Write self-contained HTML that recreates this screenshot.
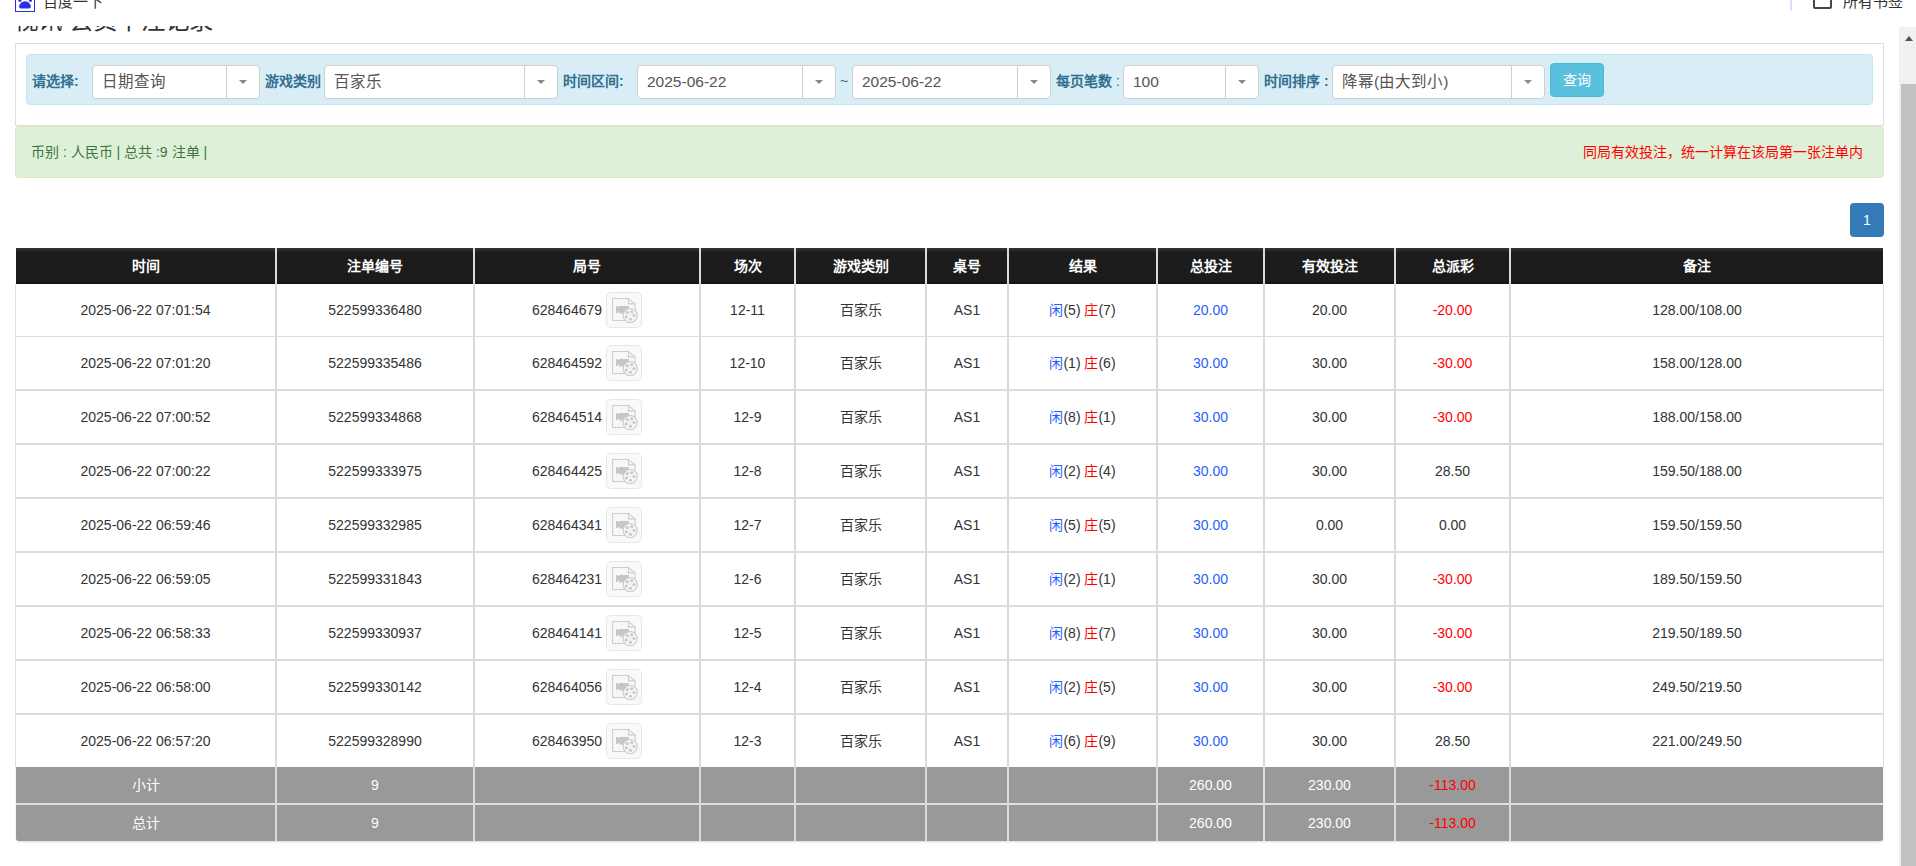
<!DOCTYPE html>
<html lang="zh-CN"><head><meta charset="utf-8"><title>视讯会员下注记录</title>
<style>
*{box-sizing:border-box}
html,body{margin:0;padding:0}
body{width:1916px;height:866px;overflow:hidden;position:relative;background:#fff;font-family:"Liberation Sans",sans-serif;font-size:14px;color:#333}
.a{position:absolute}
.t{position:absolute;white-space:nowrap}
.lbl{position:absolute;white-space:nowrap;font-weight:bold;color:#31708f;font-size:14px;line-height:20px;top:71px}
.sel{position:absolute;top:65px;height:34px;background:#fff;border:1px solid #cfcfcf;border-radius:4px}
.sel .v{position:absolute;left:9px;top:0;line-height:32px;font-size:15.5px;color:#555;white-space:nowrap}
.sel .ar{position:absolute;right:0;top:0;width:33px;height:32px;border-left:1px solid #cfcfcf}
.sel .ar:after{content:"";position:absolute;left:12px;top:14px;border-left:4px solid transparent;border-right:4px solid transparent;border-top:4px solid #888}
.cell{position:absolute;text-align:center;white-space:nowrap;font-size:14px;color:#333}
.hd{position:absolute;text-align:center;white-space:nowrap;font-size:14px;color:#fff;font-weight:bold;line-height:36px}
.blue{color:#1f5fff}.red{color:#ff0000}
</style></head><body>

<div class="t" style="left:14px;top:4px;font-size:24.5px;line-height:34px;color:#333">视讯 会员下注记录</div>
<div class="a" style="left:15px;top:43px;width:1869px;height:83px;border:1px solid #ddd;background:#fff"></div>
<div class="a" style="left:26px;top:54px;width:1847px;height:51px;border:1px solid #bce8f1;border-radius:4px;background:#d9edf7"></div>
<div class="lbl" style="left:32px">请选择:</div>
<div class="lbl" style="left:265px">游戏类别</div>
<div class="lbl" style="left:563px">时间区间:</div>
<div class="lbl" style="left:1056px">每页笔数<span style="font-weight:normal"> :</span></div>
<div class="lbl" style="left:1264px">时间排序 :</div>
<div class="sel" style="left:92px;width:168px"><span class="v">日期查询</span><span class="ar"></span></div>
<div class="sel" style="left:324px;width:234px"><span class="v">百家乐</span><span class="ar"></span></div>
<div class="sel" style="left:637px;width:199px"><span class="v">2025-06-22</span><span class="ar"></span></div>
<div class="sel" style="left:852px;width:199px"><span class="v">2025-06-22</span><span class="ar"></span></div>
<div class="sel" style="left:1123px;width:136px"><span class="v">100</span><span class="ar"></span></div>
<div class="sel" style="left:1332px;width:213px"><span class="v">降幂(由大到小)</span><span class="ar"></span></div>
<div class="t" style="left:840px;top:71px;line-height:20px;color:#31708f">~</div>
<div class="a" style="left:1550px;top:63px;width:54px;height:34px;background:#5bc0de;border:1px solid #46b8da;border-radius:4px;color:#fff;text-align:center;line-height:32px;font-size:14px">查询</div>
<div class="a" style="left:15px;top:126px;width:1869px;height:52px;border:1px solid #d6e9c6;border-radius:4px;background:#dff0d8"></div>
<div class="t" style="left:31px;top:142px;line-height:20px;color:#3c763d">币别 : 人民币 | 总共 :9 注单 |</div>
<div class="t" style="left:1583px;top:142px;line-height:20px;color:#ff0000">同局有效投注，统一计算在该局第一张注单内</div>
<div class="a" style="left:1850px;top:203px;width:34px;height:34px;background:#337ab7;border-radius:4px;color:#fff;text-align:center;line-height:34px;font-size:14px">1</div>
<div class="a" style="left:16px;top:248px;width:1867px;height:36px;background:linear-gradient(#363636 0,#2a2a2a 2px,#1c1c1c 4px,#1b1b1b 34px,#0c0c0c 36px)"></div>
<div class="a" style="left:15px;top:284px;width:1px;height:483px;background:#ddd"></div>
<div class="a" style="left:1883px;top:284px;width:1px;height:483px;background:#ddd"></div>
<div class="a" style="left:15px;top:336px;width:1868px;height:1px;background:#dcdcdc"></div>
<div class="a" style="left:15px;top:389px;width:1868px;height:2px;background:#dcdcdc"></div>
<div class="a" style="left:15px;top:443px;width:1868px;height:2px;background:#dcdcdc"></div>
<div class="a" style="left:15px;top:497px;width:1868px;height:2px;background:#dcdcdc"></div>
<div class="a" style="left:15px;top:551px;width:1868px;height:2px;background:#dcdcdc"></div>
<div class="a" style="left:15px;top:605px;width:1868px;height:2px;background:#dcdcdc"></div>
<div class="a" style="left:15px;top:659px;width:1868px;height:2px;background:#dcdcdc"></div>
<div class="a" style="left:15px;top:713px;width:1868px;height:2px;background:#dcdcdc"></div>
<div class="a" style="left:16px;top:767px;width:1867px;height:74px;background:#999;border-radius:0 0 3px 3px;box-shadow:0 1px 2px rgba(0,0,0,.15)"></div>
<div class="a" style="left:16px;top:803px;width:1867px;height:2px;background:#e0e0e0"></div>
<div class="a" style="left:275px;top:248px;width:2px;height:593px;background:#dadada"></div>
<div class="a" style="left:473px;top:248px;width:2px;height:593px;background:#dadada"></div>
<div class="a" style="left:699px;top:248px;width:2px;height:593px;background:#dadada"></div>
<div class="a" style="left:794px;top:248px;width:2px;height:593px;background:#dadada"></div>
<div class="a" style="left:925px;top:248px;width:2px;height:593px;background:#dadada"></div>
<div class="a" style="left:1007px;top:248px;width:2px;height:593px;background:#dadada"></div>
<div class="a" style="left:1156px;top:248px;width:2px;height:593px;background:#dadada"></div>
<div class="a" style="left:1263px;top:248px;width:2px;height:593px;background:#dadada"></div>
<div class="a" style="left:1394px;top:248px;width:2px;height:593px;background:#dadada"></div>
<div class="a" style="left:1509px;top:248px;width:2px;height:593px;background:#dadada"></div>
<div class="hd" style="left:16px;width:259px;top:248px">时间</div>
<div class="hd" style="left:277px;width:196px;top:248px">注单编号</div>
<div class="hd" style="left:475px;width:224px;top:248px">局号</div>
<div class="hd" style="left:701px;width:93px;top:248px">场次</div>
<div class="hd" style="left:796px;width:129px;top:248px">游戏类别</div>
<div class="hd" style="left:927px;width:80px;top:248px">桌号</div>
<div class="hd" style="left:1009px;width:147px;top:248px">结果</div>
<div class="hd" style="left:1158px;width:105px;top:248px">总投注</div>
<div class="hd" style="left:1265px;width:129px;top:248px">有效投注</div>
<div class="hd" style="left:1396px;width:113px;top:248px">总派彩</div>
<div class="hd" style="left:1511px;width:372px;top:248px">备注</div>
<div class="cell" style="left:16px;width:259px;top:284px;height:52px;line-height:52px">2025-06-22 07:01:54</div>
<div class="cell" style="left:277px;width:196px;top:284px;height:52px;line-height:52px">522599336480</div>
<div class="cell" style="left:475px;width:224px;top:284px;height:52px;line-height:52px">628464679<span style="display:inline-block;vertical-align:middle;margin-left:4px;width:36px;height:36px;border:1px solid #e6e6e6;border-radius:5px;background:#f9f9f9;position:relative;top:-1px"><svg width="36" height="36" viewBox="0 0 36 36" style="position:absolute;left:-1px;top:-1px"><path d="M6.6 6.5h15.9l6.6 5.4v16.6H6.6z" fill="#f7f7f7" stroke="#cdcdcd" stroke-width="1.1"/><path d="M22.5 6.5v5.4h6.6" fill="none" stroke="#cdcdcd" stroke-width="1.1"/><path d="M10 14h1.8v0.9h1.4V14h9.7v7.6h-9.7v-1.7h-1.4v1H10z" fill="#c6c6c6"/><circle cx="24.2" cy="23.6" r="7.1" fill="#f5f5f5" stroke="#cbcbcb" stroke-width="1.1"/><circle cx="21.3" cy="20.6" r="1.55" fill="#c9c9c9"/><circle cx="25.7" cy="19.7" r="1.55" fill="#c9c9c9"/><circle cx="28" cy="23.5" r="1.55" fill="#c9c9c9"/><circle cx="20.3" cy="25" r="1.55" fill="#c9c9c9"/><circle cx="24.5" cy="27.3" r="1.55" fill="#c9c9c9"/><circle cx="24" cy="23.3" r="0.5" fill="#c9c9c9"/></svg></span></div>
<div class="cell" style="left:701px;width:93px;top:284px;height:52px;line-height:52px">12-11</div>
<div class="cell" style="left:796px;width:129px;top:284px;height:52px;line-height:52px">百家乐</div>
<div class="cell" style="left:927px;width:80px;top:284px;height:52px;line-height:52px">AS1</div>
<div class="cell" style="left:1009px;width:147px;top:284px;height:52px;line-height:52px"><span class="blue">闲</span>(5) <span class="red">庄</span>(7)</div>
<div class="cell" style="left:1158px;width:105px;top:284px;height:52px;line-height:52px"><span class="blue">20.00</span></div>
<div class="cell" style="left:1265px;width:129px;top:284px;height:52px;line-height:52px">20.00</div>
<div class="cell" style="left:1396px;width:113px;top:284px;height:52px;line-height:52px"><span class="red">-20.00</span></div>
<div class="cell" style="left:1511px;width:372px;top:284px;height:52px;line-height:52px">128.00/108.00</div>
<div class="cell" style="left:16px;width:259px;top:337px;height:52px;line-height:52px">2025-06-22 07:01:20</div>
<div class="cell" style="left:277px;width:196px;top:337px;height:52px;line-height:52px">522599335486</div>
<div class="cell" style="left:475px;width:224px;top:337px;height:52px;line-height:52px">628464592<span style="display:inline-block;vertical-align:middle;margin-left:4px;width:36px;height:36px;border:1px solid #e6e6e6;border-radius:5px;background:#f9f9f9;position:relative;top:-1px"><svg width="36" height="36" viewBox="0 0 36 36" style="position:absolute;left:-1px;top:-1px"><path d="M6.6 6.5h15.9l6.6 5.4v16.6H6.6z" fill="#f7f7f7" stroke="#cdcdcd" stroke-width="1.1"/><path d="M22.5 6.5v5.4h6.6" fill="none" stroke="#cdcdcd" stroke-width="1.1"/><path d="M10 14h1.8v0.9h1.4V14h9.7v7.6h-9.7v-1.7h-1.4v1H10z" fill="#c6c6c6"/><circle cx="24.2" cy="23.6" r="7.1" fill="#f5f5f5" stroke="#cbcbcb" stroke-width="1.1"/><circle cx="21.3" cy="20.6" r="1.55" fill="#c9c9c9"/><circle cx="25.7" cy="19.7" r="1.55" fill="#c9c9c9"/><circle cx="28" cy="23.5" r="1.55" fill="#c9c9c9"/><circle cx="20.3" cy="25" r="1.55" fill="#c9c9c9"/><circle cx="24.5" cy="27.3" r="1.55" fill="#c9c9c9"/><circle cx="24" cy="23.3" r="0.5" fill="#c9c9c9"/></svg></span></div>
<div class="cell" style="left:701px;width:93px;top:337px;height:52px;line-height:52px">12-10</div>
<div class="cell" style="left:796px;width:129px;top:337px;height:52px;line-height:52px">百家乐</div>
<div class="cell" style="left:927px;width:80px;top:337px;height:52px;line-height:52px">AS1</div>
<div class="cell" style="left:1009px;width:147px;top:337px;height:52px;line-height:52px"><span class="blue">闲</span>(1) <span class="red">庄</span>(6)</div>
<div class="cell" style="left:1158px;width:105px;top:337px;height:52px;line-height:52px"><span class="blue">30.00</span></div>
<div class="cell" style="left:1265px;width:129px;top:337px;height:52px;line-height:52px">30.00</div>
<div class="cell" style="left:1396px;width:113px;top:337px;height:52px;line-height:52px"><span class="red">-30.00</span></div>
<div class="cell" style="left:1511px;width:372px;top:337px;height:52px;line-height:52px">158.00/128.00</div>
<div class="cell" style="left:16px;width:259px;top:391px;height:52px;line-height:52px">2025-06-22 07:00:52</div>
<div class="cell" style="left:277px;width:196px;top:391px;height:52px;line-height:52px">522599334868</div>
<div class="cell" style="left:475px;width:224px;top:391px;height:52px;line-height:52px">628464514<span style="display:inline-block;vertical-align:middle;margin-left:4px;width:36px;height:36px;border:1px solid #e6e6e6;border-radius:5px;background:#f9f9f9;position:relative;top:-1px"><svg width="36" height="36" viewBox="0 0 36 36" style="position:absolute;left:-1px;top:-1px"><path d="M6.6 6.5h15.9l6.6 5.4v16.6H6.6z" fill="#f7f7f7" stroke="#cdcdcd" stroke-width="1.1"/><path d="M22.5 6.5v5.4h6.6" fill="none" stroke="#cdcdcd" stroke-width="1.1"/><path d="M10 14h1.8v0.9h1.4V14h9.7v7.6h-9.7v-1.7h-1.4v1H10z" fill="#c6c6c6"/><circle cx="24.2" cy="23.6" r="7.1" fill="#f5f5f5" stroke="#cbcbcb" stroke-width="1.1"/><circle cx="21.3" cy="20.6" r="1.55" fill="#c9c9c9"/><circle cx="25.7" cy="19.7" r="1.55" fill="#c9c9c9"/><circle cx="28" cy="23.5" r="1.55" fill="#c9c9c9"/><circle cx="20.3" cy="25" r="1.55" fill="#c9c9c9"/><circle cx="24.5" cy="27.3" r="1.55" fill="#c9c9c9"/><circle cx="24" cy="23.3" r="0.5" fill="#c9c9c9"/></svg></span></div>
<div class="cell" style="left:701px;width:93px;top:391px;height:52px;line-height:52px">12-9</div>
<div class="cell" style="left:796px;width:129px;top:391px;height:52px;line-height:52px">百家乐</div>
<div class="cell" style="left:927px;width:80px;top:391px;height:52px;line-height:52px">AS1</div>
<div class="cell" style="left:1009px;width:147px;top:391px;height:52px;line-height:52px"><span class="blue">闲</span>(8) <span class="red">庄</span>(1)</div>
<div class="cell" style="left:1158px;width:105px;top:391px;height:52px;line-height:52px"><span class="blue">30.00</span></div>
<div class="cell" style="left:1265px;width:129px;top:391px;height:52px;line-height:52px">30.00</div>
<div class="cell" style="left:1396px;width:113px;top:391px;height:52px;line-height:52px"><span class="red">-30.00</span></div>
<div class="cell" style="left:1511px;width:372px;top:391px;height:52px;line-height:52px">188.00/158.00</div>
<div class="cell" style="left:16px;width:259px;top:445px;height:52px;line-height:52px">2025-06-22 07:00:22</div>
<div class="cell" style="left:277px;width:196px;top:445px;height:52px;line-height:52px">522599333975</div>
<div class="cell" style="left:475px;width:224px;top:445px;height:52px;line-height:52px">628464425<span style="display:inline-block;vertical-align:middle;margin-left:4px;width:36px;height:36px;border:1px solid #e6e6e6;border-radius:5px;background:#f9f9f9;position:relative;top:-1px"><svg width="36" height="36" viewBox="0 0 36 36" style="position:absolute;left:-1px;top:-1px"><path d="M6.6 6.5h15.9l6.6 5.4v16.6H6.6z" fill="#f7f7f7" stroke="#cdcdcd" stroke-width="1.1"/><path d="M22.5 6.5v5.4h6.6" fill="none" stroke="#cdcdcd" stroke-width="1.1"/><path d="M10 14h1.8v0.9h1.4V14h9.7v7.6h-9.7v-1.7h-1.4v1H10z" fill="#c6c6c6"/><circle cx="24.2" cy="23.6" r="7.1" fill="#f5f5f5" stroke="#cbcbcb" stroke-width="1.1"/><circle cx="21.3" cy="20.6" r="1.55" fill="#c9c9c9"/><circle cx="25.7" cy="19.7" r="1.55" fill="#c9c9c9"/><circle cx="28" cy="23.5" r="1.55" fill="#c9c9c9"/><circle cx="20.3" cy="25" r="1.55" fill="#c9c9c9"/><circle cx="24.5" cy="27.3" r="1.55" fill="#c9c9c9"/><circle cx="24" cy="23.3" r="0.5" fill="#c9c9c9"/></svg></span></div>
<div class="cell" style="left:701px;width:93px;top:445px;height:52px;line-height:52px">12-8</div>
<div class="cell" style="left:796px;width:129px;top:445px;height:52px;line-height:52px">百家乐</div>
<div class="cell" style="left:927px;width:80px;top:445px;height:52px;line-height:52px">AS1</div>
<div class="cell" style="left:1009px;width:147px;top:445px;height:52px;line-height:52px"><span class="blue">闲</span>(2) <span class="red">庄</span>(4)</div>
<div class="cell" style="left:1158px;width:105px;top:445px;height:52px;line-height:52px"><span class="blue">30.00</span></div>
<div class="cell" style="left:1265px;width:129px;top:445px;height:52px;line-height:52px">30.00</div>
<div class="cell" style="left:1396px;width:113px;top:445px;height:52px;line-height:52px"><span class="">28.50</span></div>
<div class="cell" style="left:1511px;width:372px;top:445px;height:52px;line-height:52px">159.50/188.00</div>
<div class="cell" style="left:16px;width:259px;top:499px;height:52px;line-height:52px">2025-06-22 06:59:46</div>
<div class="cell" style="left:277px;width:196px;top:499px;height:52px;line-height:52px">522599332985</div>
<div class="cell" style="left:475px;width:224px;top:499px;height:52px;line-height:52px">628464341<span style="display:inline-block;vertical-align:middle;margin-left:4px;width:36px;height:36px;border:1px solid #e6e6e6;border-radius:5px;background:#f9f9f9;position:relative;top:-1px"><svg width="36" height="36" viewBox="0 0 36 36" style="position:absolute;left:-1px;top:-1px"><path d="M6.6 6.5h15.9l6.6 5.4v16.6H6.6z" fill="#f7f7f7" stroke="#cdcdcd" stroke-width="1.1"/><path d="M22.5 6.5v5.4h6.6" fill="none" stroke="#cdcdcd" stroke-width="1.1"/><path d="M10 14h1.8v0.9h1.4V14h9.7v7.6h-9.7v-1.7h-1.4v1H10z" fill="#c6c6c6"/><circle cx="24.2" cy="23.6" r="7.1" fill="#f5f5f5" stroke="#cbcbcb" stroke-width="1.1"/><circle cx="21.3" cy="20.6" r="1.55" fill="#c9c9c9"/><circle cx="25.7" cy="19.7" r="1.55" fill="#c9c9c9"/><circle cx="28" cy="23.5" r="1.55" fill="#c9c9c9"/><circle cx="20.3" cy="25" r="1.55" fill="#c9c9c9"/><circle cx="24.5" cy="27.3" r="1.55" fill="#c9c9c9"/><circle cx="24" cy="23.3" r="0.5" fill="#c9c9c9"/></svg></span></div>
<div class="cell" style="left:701px;width:93px;top:499px;height:52px;line-height:52px">12-7</div>
<div class="cell" style="left:796px;width:129px;top:499px;height:52px;line-height:52px">百家乐</div>
<div class="cell" style="left:927px;width:80px;top:499px;height:52px;line-height:52px">AS1</div>
<div class="cell" style="left:1009px;width:147px;top:499px;height:52px;line-height:52px"><span class="blue">闲</span>(5) <span class="red">庄</span>(5)</div>
<div class="cell" style="left:1158px;width:105px;top:499px;height:52px;line-height:52px"><span class="blue">30.00</span></div>
<div class="cell" style="left:1265px;width:129px;top:499px;height:52px;line-height:52px">0.00</div>
<div class="cell" style="left:1396px;width:113px;top:499px;height:52px;line-height:52px"><span class="">0.00</span></div>
<div class="cell" style="left:1511px;width:372px;top:499px;height:52px;line-height:52px">159.50/159.50</div>
<div class="cell" style="left:16px;width:259px;top:553px;height:52px;line-height:52px">2025-06-22 06:59:05</div>
<div class="cell" style="left:277px;width:196px;top:553px;height:52px;line-height:52px">522599331843</div>
<div class="cell" style="left:475px;width:224px;top:553px;height:52px;line-height:52px">628464231<span style="display:inline-block;vertical-align:middle;margin-left:4px;width:36px;height:36px;border:1px solid #e6e6e6;border-radius:5px;background:#f9f9f9;position:relative;top:-1px"><svg width="36" height="36" viewBox="0 0 36 36" style="position:absolute;left:-1px;top:-1px"><path d="M6.6 6.5h15.9l6.6 5.4v16.6H6.6z" fill="#f7f7f7" stroke="#cdcdcd" stroke-width="1.1"/><path d="M22.5 6.5v5.4h6.6" fill="none" stroke="#cdcdcd" stroke-width="1.1"/><path d="M10 14h1.8v0.9h1.4V14h9.7v7.6h-9.7v-1.7h-1.4v1H10z" fill="#c6c6c6"/><circle cx="24.2" cy="23.6" r="7.1" fill="#f5f5f5" stroke="#cbcbcb" stroke-width="1.1"/><circle cx="21.3" cy="20.6" r="1.55" fill="#c9c9c9"/><circle cx="25.7" cy="19.7" r="1.55" fill="#c9c9c9"/><circle cx="28" cy="23.5" r="1.55" fill="#c9c9c9"/><circle cx="20.3" cy="25" r="1.55" fill="#c9c9c9"/><circle cx="24.5" cy="27.3" r="1.55" fill="#c9c9c9"/><circle cx="24" cy="23.3" r="0.5" fill="#c9c9c9"/></svg></span></div>
<div class="cell" style="left:701px;width:93px;top:553px;height:52px;line-height:52px">12-6</div>
<div class="cell" style="left:796px;width:129px;top:553px;height:52px;line-height:52px">百家乐</div>
<div class="cell" style="left:927px;width:80px;top:553px;height:52px;line-height:52px">AS1</div>
<div class="cell" style="left:1009px;width:147px;top:553px;height:52px;line-height:52px"><span class="blue">闲</span>(2) <span class="red">庄</span>(1)</div>
<div class="cell" style="left:1158px;width:105px;top:553px;height:52px;line-height:52px"><span class="blue">30.00</span></div>
<div class="cell" style="left:1265px;width:129px;top:553px;height:52px;line-height:52px">30.00</div>
<div class="cell" style="left:1396px;width:113px;top:553px;height:52px;line-height:52px"><span class="red">-30.00</span></div>
<div class="cell" style="left:1511px;width:372px;top:553px;height:52px;line-height:52px">189.50/159.50</div>
<div class="cell" style="left:16px;width:259px;top:607px;height:52px;line-height:52px">2025-06-22 06:58:33</div>
<div class="cell" style="left:277px;width:196px;top:607px;height:52px;line-height:52px">522599330937</div>
<div class="cell" style="left:475px;width:224px;top:607px;height:52px;line-height:52px">628464141<span style="display:inline-block;vertical-align:middle;margin-left:4px;width:36px;height:36px;border:1px solid #e6e6e6;border-radius:5px;background:#f9f9f9;position:relative;top:-1px"><svg width="36" height="36" viewBox="0 0 36 36" style="position:absolute;left:-1px;top:-1px"><path d="M6.6 6.5h15.9l6.6 5.4v16.6H6.6z" fill="#f7f7f7" stroke="#cdcdcd" stroke-width="1.1"/><path d="M22.5 6.5v5.4h6.6" fill="none" stroke="#cdcdcd" stroke-width="1.1"/><path d="M10 14h1.8v0.9h1.4V14h9.7v7.6h-9.7v-1.7h-1.4v1H10z" fill="#c6c6c6"/><circle cx="24.2" cy="23.6" r="7.1" fill="#f5f5f5" stroke="#cbcbcb" stroke-width="1.1"/><circle cx="21.3" cy="20.6" r="1.55" fill="#c9c9c9"/><circle cx="25.7" cy="19.7" r="1.55" fill="#c9c9c9"/><circle cx="28" cy="23.5" r="1.55" fill="#c9c9c9"/><circle cx="20.3" cy="25" r="1.55" fill="#c9c9c9"/><circle cx="24.5" cy="27.3" r="1.55" fill="#c9c9c9"/><circle cx="24" cy="23.3" r="0.5" fill="#c9c9c9"/></svg></span></div>
<div class="cell" style="left:701px;width:93px;top:607px;height:52px;line-height:52px">12-5</div>
<div class="cell" style="left:796px;width:129px;top:607px;height:52px;line-height:52px">百家乐</div>
<div class="cell" style="left:927px;width:80px;top:607px;height:52px;line-height:52px">AS1</div>
<div class="cell" style="left:1009px;width:147px;top:607px;height:52px;line-height:52px"><span class="blue">闲</span>(8) <span class="red">庄</span>(7)</div>
<div class="cell" style="left:1158px;width:105px;top:607px;height:52px;line-height:52px"><span class="blue">30.00</span></div>
<div class="cell" style="left:1265px;width:129px;top:607px;height:52px;line-height:52px">30.00</div>
<div class="cell" style="left:1396px;width:113px;top:607px;height:52px;line-height:52px"><span class="red">-30.00</span></div>
<div class="cell" style="left:1511px;width:372px;top:607px;height:52px;line-height:52px">219.50/189.50</div>
<div class="cell" style="left:16px;width:259px;top:661px;height:52px;line-height:52px">2025-06-22 06:58:00</div>
<div class="cell" style="left:277px;width:196px;top:661px;height:52px;line-height:52px">522599330142</div>
<div class="cell" style="left:475px;width:224px;top:661px;height:52px;line-height:52px">628464056<span style="display:inline-block;vertical-align:middle;margin-left:4px;width:36px;height:36px;border:1px solid #e6e6e6;border-radius:5px;background:#f9f9f9;position:relative;top:-1px"><svg width="36" height="36" viewBox="0 0 36 36" style="position:absolute;left:-1px;top:-1px"><path d="M6.6 6.5h15.9l6.6 5.4v16.6H6.6z" fill="#f7f7f7" stroke="#cdcdcd" stroke-width="1.1"/><path d="M22.5 6.5v5.4h6.6" fill="none" stroke="#cdcdcd" stroke-width="1.1"/><path d="M10 14h1.8v0.9h1.4V14h9.7v7.6h-9.7v-1.7h-1.4v1H10z" fill="#c6c6c6"/><circle cx="24.2" cy="23.6" r="7.1" fill="#f5f5f5" stroke="#cbcbcb" stroke-width="1.1"/><circle cx="21.3" cy="20.6" r="1.55" fill="#c9c9c9"/><circle cx="25.7" cy="19.7" r="1.55" fill="#c9c9c9"/><circle cx="28" cy="23.5" r="1.55" fill="#c9c9c9"/><circle cx="20.3" cy="25" r="1.55" fill="#c9c9c9"/><circle cx="24.5" cy="27.3" r="1.55" fill="#c9c9c9"/><circle cx="24" cy="23.3" r="0.5" fill="#c9c9c9"/></svg></span></div>
<div class="cell" style="left:701px;width:93px;top:661px;height:52px;line-height:52px">12-4</div>
<div class="cell" style="left:796px;width:129px;top:661px;height:52px;line-height:52px">百家乐</div>
<div class="cell" style="left:927px;width:80px;top:661px;height:52px;line-height:52px">AS1</div>
<div class="cell" style="left:1009px;width:147px;top:661px;height:52px;line-height:52px"><span class="blue">闲</span>(2) <span class="red">庄</span>(5)</div>
<div class="cell" style="left:1158px;width:105px;top:661px;height:52px;line-height:52px"><span class="blue">30.00</span></div>
<div class="cell" style="left:1265px;width:129px;top:661px;height:52px;line-height:52px">30.00</div>
<div class="cell" style="left:1396px;width:113px;top:661px;height:52px;line-height:52px"><span class="red">-30.00</span></div>
<div class="cell" style="left:1511px;width:372px;top:661px;height:52px;line-height:52px">249.50/219.50</div>
<div class="cell" style="left:16px;width:259px;top:715px;height:52px;line-height:52px">2025-06-22 06:57:20</div>
<div class="cell" style="left:277px;width:196px;top:715px;height:52px;line-height:52px">522599328990</div>
<div class="cell" style="left:475px;width:224px;top:715px;height:52px;line-height:52px">628463950<span style="display:inline-block;vertical-align:middle;margin-left:4px;width:36px;height:36px;border:1px solid #e6e6e6;border-radius:5px;background:#f9f9f9;position:relative;top:-1px"><svg width="36" height="36" viewBox="0 0 36 36" style="position:absolute;left:-1px;top:-1px"><path d="M6.6 6.5h15.9l6.6 5.4v16.6H6.6z" fill="#f7f7f7" stroke="#cdcdcd" stroke-width="1.1"/><path d="M22.5 6.5v5.4h6.6" fill="none" stroke="#cdcdcd" stroke-width="1.1"/><path d="M10 14h1.8v0.9h1.4V14h9.7v7.6h-9.7v-1.7h-1.4v1H10z" fill="#c6c6c6"/><circle cx="24.2" cy="23.6" r="7.1" fill="#f5f5f5" stroke="#cbcbcb" stroke-width="1.1"/><circle cx="21.3" cy="20.6" r="1.55" fill="#c9c9c9"/><circle cx="25.7" cy="19.7" r="1.55" fill="#c9c9c9"/><circle cx="28" cy="23.5" r="1.55" fill="#c9c9c9"/><circle cx="20.3" cy="25" r="1.55" fill="#c9c9c9"/><circle cx="24.5" cy="27.3" r="1.55" fill="#c9c9c9"/><circle cx="24" cy="23.3" r="0.5" fill="#c9c9c9"/></svg></span></div>
<div class="cell" style="left:701px;width:93px;top:715px;height:52px;line-height:52px">12-3</div>
<div class="cell" style="left:796px;width:129px;top:715px;height:52px;line-height:52px">百家乐</div>
<div class="cell" style="left:927px;width:80px;top:715px;height:52px;line-height:52px">AS1</div>
<div class="cell" style="left:1009px;width:147px;top:715px;height:52px;line-height:52px"><span class="blue">闲</span>(6) <span class="red">庄</span>(9)</div>
<div class="cell" style="left:1158px;width:105px;top:715px;height:52px;line-height:52px"><span class="blue">30.00</span></div>
<div class="cell" style="left:1265px;width:129px;top:715px;height:52px;line-height:52px">30.00</div>
<div class="cell" style="left:1396px;width:113px;top:715px;height:52px;line-height:52px"><span class="">28.50</span></div>
<div class="cell" style="left:1511px;width:372px;top:715px;height:52px;line-height:52px">221.00/249.50</div>
<div class="cell" style="left:16px;width:259px;top:767px;height:36px;line-height:36px;color:#fff">小计</div>
<div class="cell" style="left:277px;width:196px;top:767px;height:36px;line-height:36px;color:#fff">9</div>
<div class="cell" style="left:1158px;width:105px;top:767px;height:36px;line-height:36px;color:#fff">260.00</div>
<div class="cell" style="left:1265px;width:129px;top:767px;height:36px;line-height:36px;color:#fff">230.00</div>
<div class="cell" style="left:1396px;width:113px;top:767px;height:36px;line-height:36px;color:#fff"><span class="red">-113.00</span></div>
<div class="cell" style="left:16px;width:259px;top:805px;height:36px;line-height:36px;color:#fff">总计</div>
<div class="cell" style="left:277px;width:196px;top:805px;height:36px;line-height:36px;color:#fff">9</div>
<div class="cell" style="left:1158px;width:105px;top:805px;height:36px;line-height:36px;color:#fff">260.00</div>
<div class="cell" style="left:1265px;width:129px;top:805px;height:36px;line-height:36px;color:#fff">230.00</div>
<div class="cell" style="left:1396px;width:113px;top:805px;height:36px;line-height:36px;color:#fff"><span class="red">-113.00</span></div>
<div class="a" style="left:0;top:0;width:1916px;height:26px;background:#fff;overflow:hidden">
<div class="a" style="left:15px;top:-8px;width:20px;height:20px;border:1px solid #2932e1;background:#fff"><svg width="18" height="18" viewBox="0 0 18 18" style="position:absolute;left:0;top:0"><ellipse cx="3.9" cy="6.8" rx="1.7" ry="2.3" fill="#2932e1"/><ellipse cx="14.4" cy="6.8" rx="1.7" ry="2.3" fill="#2932e1"/><path d="M9 8.2C6 8.2 3 11.4 3.1 13.5 3.2 15.6 5.5 15.9 9 15.4 12.5 15.9 14.8 15.6 14.9 13.5 15 11.4 12 8.2 9 8.2z" fill="#2932e1"/></svg></div>
<div class="t" style="left:43px;top:-8px;font-size:15px;line-height:20px;color:#333">百度一下</div>
<div class="a" style="left:1790px;top:0;width:2px;height:11px;background:#d3e3fd;border-radius:1px"></div>
<div class="a" style="left:1813px;top:-8px;width:19px;height:17px;border:2px solid #474747;border-radius:2px"></div>
<div class="t" style="left:1843px;top:-8px;font-size:15px;line-height:20px;color:#333">所有书签</div>
</div>
<div class="a" style="left:1899px;top:27px;width:17px;height:839px;background:#f1f1f1"></div>
<div class="a" style="left:1904.8px;top:36px;width:0;height:0;border-left:4.7px solid transparent;border-right:4.7px solid transparent;border-bottom:5px solid #505050"></div>
<div class="a" style="left:1901px;top:84px;width:15px;height:782px;background:#c1c1c1"></div>
</body></html>
